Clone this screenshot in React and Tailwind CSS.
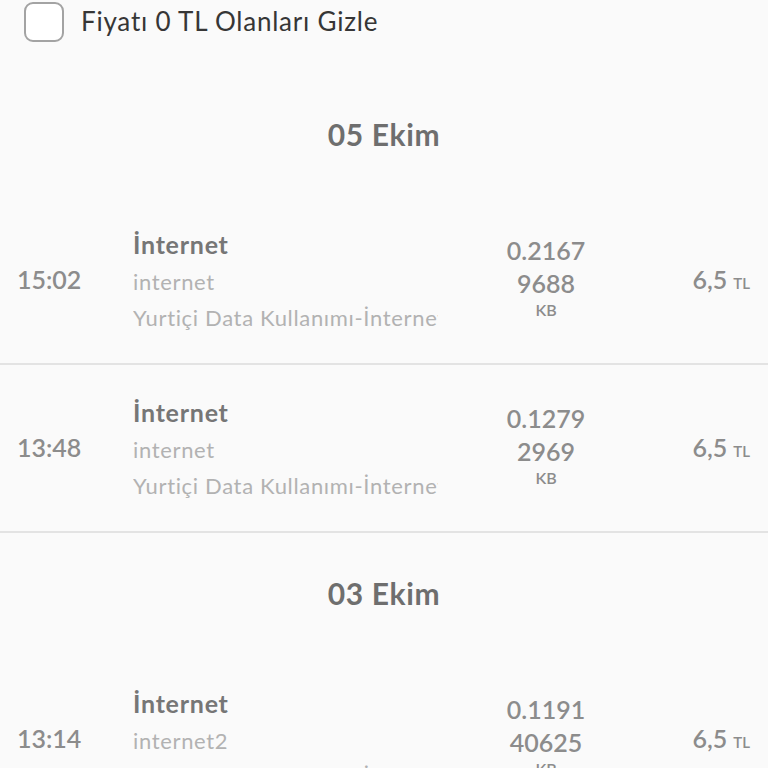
import { useState } from "react";

const days = [
  {
    date: "05 Ekim",
    items: [
      { time: "15:02", apn: "internet", amount: ["0.2167", "9688"] },
      { time: "13:48", apn: "internet", amount: ["0.1279", "2969"] },
    ],
  },
  {
    date: "03 Ekim",
    items: [{ time: "13:14", apn: "internet2", amount: ["0.1191", "40625"] }],
  },
];

function UsageRow({ item }) {
  return (
    <div className="flex h-[168px] items-center border-b-2 border-[#e3e3e3]">
      <div className="w-[133px] shrink-0 pl-[17px] text-[25px] font-semibold text-[#8c8c8c]">{item.time}</div>
      <div className="w-[305px] shrink-0 overflow-hidden whitespace-nowrap">
        <div className="text-[25px] font-bold leading-[40px] tracking-[0.03em] text-[#767676]">İnternet</div>
        <div className="text-[22px] leading-[36px] tracking-[0.03em] text-[#b2b2b2]">{item.apn}</div>
        <div className="text-[22px] leading-[36px] tracking-[0.03em] text-[#b2b2b2]">Yurtiçi Data Kullanımı-İnternet</div>
      </div>
      <div className="flex w-[216px] shrink-0 flex-col items-center pb-[6px] text-[#8c8c8c]">
        <div className="text-[25px] font-semibold leading-[33px]">{item.amount[0]}</div>
        <div className="text-[25px] font-semibold leading-[33px]">{item.amount[1]}</div>
        <div className="text-[16px] font-semibold leading-[20px]">KB</div>
      </div>
      <div className="flex flex-1 items-baseline justify-end pr-[18px] text-[#8c8c8c]">
        <span className="text-[25px] font-semibold">6,5</span>
        <span className="ml-[6px] text-[15px] font-semibold">TL</span>
      </div>
    </div>
  );
}

export default function App() {
  const [hideFree, setHideFree] = useState(false);

  return (
    <div className="h-[768px] w-[768px] overflow-hidden bg-[#fafafa] font-['Lato',sans-serif]">
      <label className="flex h-[74px] cursor-pointer items-start gap-[17px] pl-[24px] pt-[2px]">
        <input
          type="checkbox"
          className="sr-only"
          checked={hideFree}
          onChange={(e) => setHideFree(e.target.checked)}
        />
        <span className="h-[40px] w-[40px] rounded-[9px] border-2 border-[#a3a3a3] bg-white"></span>
        <span className="pt-[2px] text-[26px] leading-[34px] tracking-[0.03em] text-[#363636]">Fiyatı 0 TL Olanları Gizle</span>
      </label>

      {days.map((day) => (
        <div key={day.date}>
          <div className="flex h-[123px] items-center justify-center pb-[2px] text-[30px] font-bold tracking-[0.02em] text-[#6e6e6e]">
            {day.date}
          </div>
          {day.items.map((item) => (
            <UsageRow key={item.time} item={item} />
          ))}
        </div>
      ))}
    </div>
  );
}
